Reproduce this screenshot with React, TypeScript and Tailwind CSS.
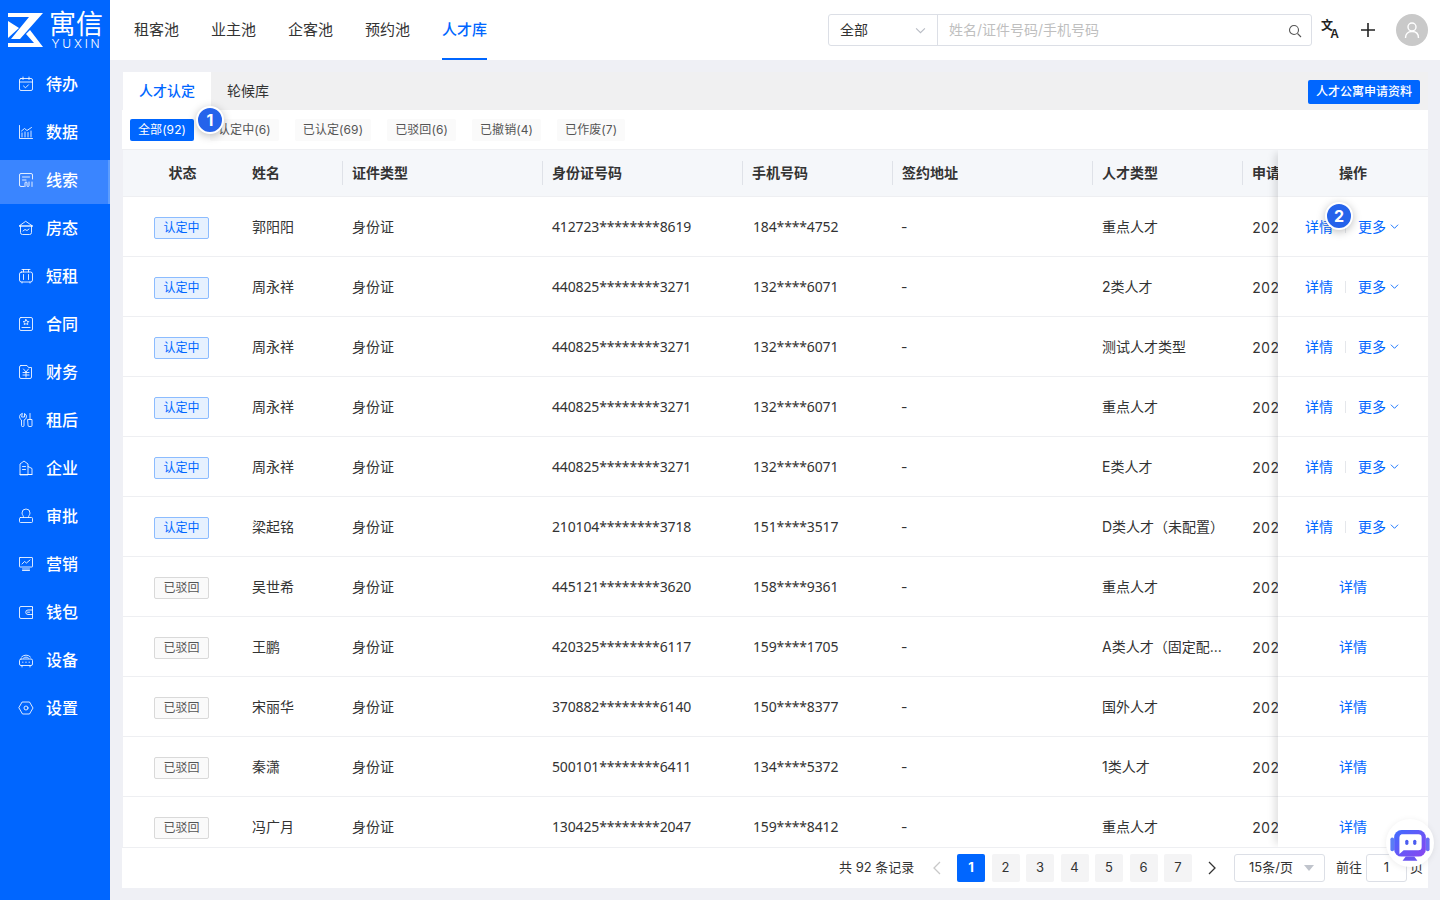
import React from "react";

const S = ({ children }: { children: React.ReactNode }) => (
  <svg width="16" height="16" viewBox="0 0 16 16" fill="none" stroke="#fff" strokeOpacity="0.85" strokeWidth="1" strokeLinecap="round" strokeLinejoin="round" className="shrink-0">
    {children}
  </svg>
);

const icons: Record<string, React.ReactNode> = {
  待办: <S><rect x="1.5" y="2.5" width="13" height="12" rx="1.5" /><path d="M1.5 6h13M5 1v2.5M11 1v2.5M5.5 10l2 1.8 3-3" /></S>,
  数据: <S><path d="M1.5 1.5v13h13" /><path d="M4 13V9M7 13V8M10 13V8.5M13 13V7M3.5 7l3-2.5 2.5 2 4.5-3" /></S>,
  线索: <S><path d="M6 14.5H3a1.5 1.5 0 0 1-1.5-1.5V3A1.5 1.5 0 0 1 3 1.5h10A1.5 1.5 0 0 1 14.500 3v4" /><path d="M4.500 5h7M4.500 8H8M7 14.500V11a1 1 0 0 1 2 0v2.500a1 1 0 0 0 2 0V10M14 10v4.500" /></S>,
  房态: <S><path d="M8 1.500 14.500 6H1.500Z" /><path d="M2.500 6v6.500a2 2 0 0 0 2 2h7a2 2 0 0 0 2-2V6" /><path d="M1.500 6h13M5 11l2-1.500 2 1 2-1.500" /></S>,
  短租: <S><rect x="1.500" y="4" width="13" height="10" rx="2" /><path d="M4 1.500h8M5.500 1.500V4M10.500 1.500V4M5.500 6.500v5M10.500 6.500v5M4 14v1M12 14v1" /></S>,
  合同: <S><rect x="1.500" y="1.500" width="13" height="13" rx="1.500" /><path d="m8 3.500 1 1.800 1.800.3-1.300 1.300.3 1.600L8 7.700l-1.800.8.3-1.600L5.200 5.600 7 5.300ZM4 11.500h8" /></S>,
  财务: <S><path d="M3 1.500h6l1.500 2h3V13a1.500 1.500 0 0 1-1.500 1.500H3A1.500 1.500 0 0 1 1.500 13V3A1.500 1.500 0 0 1 3 1.500Z" /><path d="m5.500 5 2.500 3 2.500-3M5 8.500h6M5 11h6M8 8v5" /></S>,
  租后: <S><path d="M4 1.500A3.500 3.500 0 0 0 3.500 8v5.500a1 1 0 0 0 1 1h.5a1 1 0 0 0 1-1V8A3.500 3.500 0 0 0 6.500 1.500V5H4Z" /><path d="M12 1.500v6M10 7.500h4v6a1 1 0 0 1-1 1h-2a1 1 0 0 1-1-1Z" /></S>,
  企业: <S><path d="M2 14.500V4l4-3 4 3v10.500ZM10 6.500l4 2v6h-4M2 14.500h12" /><path d="M4.500 6.500h3M4.500 9.500h3" /></S>,
  审批: <S><path d="M5.500 9.500c.5-1.500-1.500-2.500-1.500-4.500a4 4 0 0 1 8 0c0 2-2 3-1.500 4.500" /><rect x="1.500" y="9.500" width="13" height="5" rx="1" /></S>,
  营销: <S><rect x="1.500" y="1.500" width="13" height="9.500" rx="0.500" /><path d="m4 8 2.500-2.500 2 1.500 3.500-3M4.500 13h7M4.500 14.500h7" /></S>,
  钱包: <S><path d="M14.500 3.500V2.500H3A1.500 1.500 0 0 0 1.500 4v9A1.500 1.500 0 0 0 3 14.500h11.500v-11Z" /><path d="M14.500 6H10a2 2 0 0 0 0 4.500h4.500M9.500 8.200h2" /></S>,
  设备: <S><rect x="1.500" y="7" width="13" height="6.500" rx="1.500" /><path d="M4 13.500V15M12 13.500V15M4.500 10.200h.5M7.700 10.200h.6M11 10.200h.5M3.500 5A6 6 0 0 1 12.500 5M5.500 6a3.500 3.500 0 0 1 5 0" /></S>,
  设置: <S><path d="M4.500 2h7L15 8l-3.500 6h-7L1 8Z" /><circle cx="8" cy="8" r="2" /></S>,
};

const menu = ["待办", "数据", "线索", "房态", "短租", "合同", "财务", "租后", "企业", "审批", "营销", "钱包", "设备", "设置"];

type Row = { s: 0 | 1; n: string; id: string; p: string; t: string };
const rows: Row[] = [
  { s: 0, n: "郭阳阳", id: "412723********8619", p: "184****4752", t: "重点人才" },
  { s: 0, n: "周永祥", id: "440825********3271", p: "132****6071", t: "2类人才" },
  { s: 0, n: "周永祥", id: "440825********3271", p: "132****6071", t: "测试人才类型" },
  { s: 0, n: "周永祥", id: "440825********3271", p: "132****6071", t: "重点人才" },
  { s: 0, n: "周永祥", id: "440825********3271", p: "132****6071", t: "E类人才" },
  { s: 0, n: "梁起铭", id: "210104********3718", p: "151****3517", t: "D类人才（未配置）" },
  { s: 1, n: "吴世希", id: "445121********3620", p: "158****9361", t: "重点人才" },
  { s: 1, n: "王鹏", id: "420325********6117", p: "159****1705", t: "A类人才（固定配..." },
  { s: 1, n: "宋丽华", id: "370882********6140", p: "150****8377", t: "国外人才" },
  { s: 1, n: "秦潇", id: "500101********6411", p: "134****5372", t: "1类人才" },
  { s: 1, n: "冯广月", id: "130425********2047", p: "159****8412", t: "重点人才" },
];

const Num = ({ n, className }: { n: number; className: string }) => (
  <div className={`absolute z-20 flex h-[28px] w-[28px] items-center justify-center rounded-full border-2 border-white bg-[#2563eb] text-[16px] font-bold text-white shadow-[0_2px_8px_rgba(0,0,0,0.25)] ${className}`}>
    {n}
  </div>
);

const HeadCell = ({ w, label, sep = true, center = false }: { w: string; label: string; sep?: boolean; center?: boolean }) => (
  <div className={`flex h-full shrink-0 items-center ${w} ${center ? "justify-center" : ""}`}>
    {sep && <span className="h-[24px] w-px shrink-0 bg-[#dfe2e8]" />}
    <span className={`pb-[2px] ${center ? "" : sep ? "pl-[9px]" : "pl-[10px]"}`}>{label}</span>
  </div>
);

const Chevron = ({ className = "" }: { className?: string }) => (
  <svg width="10" height="10" viewBox="0 0 10 10" fill="none" stroke="currentColor" strokeWidth="1" className={className}>
    <path d="M1 3l4 4 4-4" />
  </svg>
);

const numFont = "font-['Noto_Sans','Noto_Sans_CJK_SC',sans-serif] tracking-[-0.15px]";

export default function App() {
  return (
    <div className="flex h-[900px] w-[1440px] overflow-hidden bg-[#eff0f5] font-['Inter','Noto_Sans_CJK_SC',sans-serif] text-[14px] text-[#333]">
      <aside className="flex w-[110px] shrink-0 flex-col bg-[#0066ff] text-white">
        <div className="flex h-[60px] items-start pl-[8px] pt-[13px]">
          <svg width="35" height="34" viewBox="0 0 35 34" fill="#fff" className="shrink-0">
            <path d="M0 0H35L12 26H3L21 4H0Z" />
            <path d="M0 8L11 15 0 25Z" />
            <path d="M0 30H26L18 21 22 17 35 34H0Z" />
          </svg>
          <div className="ml-[5px] flex w-[56px] flex-col items-center">
            <span className="h-[24px] whitespace-nowrap text-[27px] leading-[24px] font-normal">寓信</span>
            <span className="mt-[1px] pl-[2px] text-[12px] leading-[11px] tracking-[2.8px] font-light">YUXIN</span>
          </div>
        </div>
        <nav className="flex flex-col">
          {menu.map((m) => (
            <div key={m} className="relative flex h-[48px] items-center gap-[11px] pl-[18px]">
              {m === "线索" && <span className="absolute inset-x-0 top-[4px] bottom-0 border-r-2 border-[#5c9dff] bg-[#3a85ff]" />}
              <span className="relative z-10 flex items-center gap-[12px]">
                {icons[m]}
                <span className="text-[16px] font-medium text-white">{m}</span>
              </span>
            </div>
          ))}
        </nav>
      </aside>

      <div className="flex min-w-0 flex-1 flex-col">
        <header className="flex h-[60px] shrink-0 items-center bg-white pl-[24px] pr-[12px]">
          <nav className="flex h-full gap-[32px] text-[15px]">
            {["租客池", "业主池", "企客池", "预约池", "人才库"].map((t) => (
              <div key={t} className={`flex h-full items-center ${t === "人才库" ? "border-b-2 border-[#0066ff] pt-[2px] font-medium text-[#0066ff]" : ""}`}>{t}</div>
            ))}
          </nav>
          <div className="ml-auto flex h-[32px] w-[484px] items-center rounded-[3px] border border-[#dcdfe6] text-[14px]">
            <div className="flex h-full w-[109px] shrink-0 items-center justify-between border-r border-[#dcdfe6] pl-[11px] pr-[11px]">
              <span className="pb-[2px]">全部</span>
              <Chevron className="h-[11px] w-[11px] text-[#b8bcc4]" />
            </div>
            <span className="flex-1 pb-[2px] pl-[11px] text-[#bfbfbf]">姓名/证件号码/手机号码</span>
            <svg width="14" height="14" viewBox="0 0 14 14" fill="none" stroke="#555" strokeWidth="1.100" className="mr-[9px] mt-[2px]">
              <circle cx="6" cy="6" r="4.500" /><path d="m9.500 9.500 3.500 3.500" />
            </svg>
          </div>
          <div className="relative ml-[9px] h-[18px] w-[18px] shrink-0 font-bold text-[#222]">
            <span className="absolute left-0 top-[-1px] text-[12px] leading-[12px]">文</span>
            <span className="absolute right-0 bottom-[-1px] font-['Liberation_Sans'] text-[12px] leading-[11px]">A</span>
          </div>
          <svg width="14" height="14" viewBox="0 0 14 14" stroke="#222" strokeWidth="1.600" className="ml-[22px] shrink-0"><path d="M7 0v14M0 7h14" /></svg>
          <div className="ml-[21px] flex h-[32px] w-[32px] shrink-0 items-center justify-center rounded-full bg-[#c9c9c9]">
            <svg width="18" height="18" viewBox="0 0 18 18" fill="none" stroke="#fff" strokeWidth="1.400"><circle cx="9" cy="6" r="4" /><path d="M2.500 17c0-4 2.500-6.500 6.500-6.500s6.500 2.500 6.500 6.500" /></svg>
          </div>
        </header>

        <main className="flex min-h-0 flex-1 flex-col pb-[12px] pl-[12px] pr-[12px] pt-[12px]">
          <div className="relative flex min-h-0 flex-1 flex-col">
            <div className="ml-px flex h-[38px] shrink-0 items-center bg-[#f0f0f1] pr-[8px]">
              <div className="flex h-full w-[88px] items-center justify-center bg-white pb-[2px] font-medium text-[#0066ff]">人才认定</div>
              <div className="ml-[16px] pb-[2px]">轮候库</div>
              <button className="ml-auto flex h-[24px] w-[112px] translate-y-[1px] items-center justify-center rounded-[2px] bg-[#0066ff] pb-[1px] text-[12px] font-medium text-white">人才公寓申请资料</button>
            </div>
            <div className="flex h-[40px] shrink-0 items-center gap-[16px] border-b border-[#eeeff2] bg-white pl-[8px] text-[12px] tracking-[0.1px] text-[#555]">
              <span className="flex h-[22px] w-[64px] items-center justify-center rounded-[2px] bg-[#0066ff] text-white">全部(92)</span>
              {["认定中(6)", "已认定(69)", "已驳回(6)", "已撤销(4)", "已作废(7)"].map((c) => (
                <span key={c} className="flex h-[22px] items-center justify-center rounded-[2px] bg-[#fafafa] px-[8px]">{c}</span>
              ))}
            </div>

            <div className="ml-px flex min-h-0 flex-1 overflow-hidden bg-white">
              <div className="min-w-0 flex-1 overflow-hidden">
                <div className="flex h-[47px] border-b border-[#eeeff2] bg-[#f5f7fa] font-bold">
                  <HeadCell w="w-[119px]" label="状态" sep={false} center />
                  <HeadCell w="w-[100px]" label="姓名" sep={false} />
                  <HeadCell w="w-[200px]" label="证件类型" />
                  <HeadCell w="w-[200px]" label="身份证号码" />
                  <HeadCell w="w-[150px]" label="手机号码" />
                  <HeadCell w="w-[200px]" label="签约地址" />
                  <HeadCell w="w-[150px]" label="人才类型" />
                  <HeadCell w="w-[150px]" label="申请时间" />
                </div>
                {rows.map((r, i) => (
                  <div key={i} className="flex h-[60px] items-center border-b border-[#eeeff2]">
                    <div className="flex w-[117px] shrink-0 justify-center pt-[2px]">
                      <span className={`flex h-[22px] w-[55px] items-center justify-center rounded-[2px] border text-[12px] ${r.s === 0 ? "border-[#8cbcff] bg-[#e6f1ff] text-[#0066ff]" : "border-[#d9d9d9] bg-[#fafafa] text-[#555]"}`}>
                        {r.s === 0 ? "认定中" : "已驳回"}
                      </span>
                    </div>
                    <div className="w-[102px] shrink-0 pl-[12px]">{r.n}</div>
                    <div className="w-[200px] shrink-0 pl-[10px]">身份证</div>
                    <div className={`w-[200px] shrink-0 pl-[10px] ${numFont}`}>{r.id}</div>
                    <div className={`w-[150px] shrink-0 pl-[11px] ${numFont}`}>{r.p}</div>
                    <div className="w-[200px] shrink-0 pl-[9px]">-</div>
                    <div className="w-[150px] shrink-0 whitespace-nowrap pl-[10px]">{r.t}</div>
                    <div className="w-[150px] shrink-0 pl-[10px] pt-[1px] tabular-nums">2023-08-01</div>
                  </div>
                ))}
              </div>
              <div className="relative z-10 w-[150px] shrink-0 bg-white shadow-[-6px_0_8px_-3px_rgba(0,0,0,0.13)]">
                <div className="flex h-[47px] items-center justify-center border-b border-[#eeeff2] bg-[#f5f7fa] pb-[2px] font-bold">操作</div>
                {rows.map((r, i) => (
                  <div key={i} className="flex h-[60px] items-center justify-center border-b border-[#eeeff2] text-[#0066ff]">
                    {r.s === 0 ? (
                      <div className="mr-[2px] flex w-[94px] items-center justify-between">
                        <span>详情</span>
                        <span className="h-[12px] w-px bg-[#e5e7eb]" />
                        <span className="flex items-center gap-[4px]">更多<Chevron className="h-[9px] w-[9px]" /></span>
                      </div>
                    ) : (
                      <span>详情</span>
                    )}
                  </div>
                ))}
              </div>
            </div>

            <div className="relative z-10 flex h-[41px] shrink-0 items-center border-t border-[#eeeff2] bg-white pl-[717px] text-[13px]">
              <span className="w-[75px] whitespace-nowrap">共 92 条记录</span>
              <svg width="8" height="14" viewBox="0 0 8 14" fill="none" stroke="#c8c8c8" strokeWidth="1.300" className="ml-[19px]"><path d="M7 1 1 7l6 6" /></svg>
              <div className="ml-[16px] flex gap-[6.500px]">
                {[1, 2, 3, 4, 5, 6, 7].map((n) => (
                  <span key={n} className={`flex h-[28px] w-[28px] items-center justify-center rounded-[2px] ${n === 1 ? "bg-[#0066ff] font-bold text-white" : "bg-[#f4f4f5] text-[#333]"}`}>{n}</span>
                ))}
              </div>
              <svg width="8" height="14" viewBox="0 0 8 14" fill="none" stroke="#333" strokeWidth="1.300" className="ml-[16px]"><path d="m1 1 6 6-6 6" /></svg>
              <div className="ml-[18px] flex h-[28px] w-[91px] items-center justify-between rounded-[3px] border border-[#dcdfe6] pl-[14px] pr-[10px]">
                <span>15条/页</span>
                <span className="h-0 w-0 border-x-[5px] border-t-[6px] border-x-transparent border-t-[#c0c4cc]" />
              </div>
              <span className="ml-[11px] whitespace-nowrap">前往</span>
              <span className="ml-[4px] flex h-[28px] w-[41px] items-center justify-center rounded-[3px] border border-[#dcdfe6]">1</span>
              <span className="ml-[3px]">页</span>
            </div>

            <Num n={1} className="left-[74px] top-[34px]" />
            <Num n={2} className="left-[1203px] top-[130px]" />
            <div className="absolute left-[1264px] top-[747px] z-30 flex h-[48px] w-[48px] items-center justify-center rounded-full bg-white pt-[5px] shadow-[0_1px_6px_rgba(0,0,0,0.08)]">
              <svg width="42" height="36" viewBox="0 0 38 34">
                <defs>
                  <linearGradient id="bot" x1="0" y1="0" x2="1" y2="1">
                    <stop offset="0" stopColor="#3f6cff" />
                    <stop offset="1" stopColor="#8a45f0" />
                  </linearGradient>
                </defs>
                <rect x="0.500" y="9" width="3.500" height="13" rx="1.700" fill="#5a7cf5" />
                <rect x="34" y="9" width="3.500" height="13" rx="1.700" fill="#6a6cf5" />
                <rect x="4" y="2" width="30" height="25" rx="7" fill="url(#bot)" />
                <path d="M11 6h16a3 3 0 0 1 3 3v9a3 3 0 0 1-3 3H13l-4 3.500V9a3 3 0 0 1 2-3Z" fill="#fff" />
                <rect x="14.500" y="11" width="3" height="5" rx="1.500" fill="#4a5cf0" />
                <rect x="22" y="11" width="3" height="5" rx="1.500" fill="#4a5cf0" />
                <path d="M15 27h8l3 4H12Z" fill="#6a55f0" />
              </svg>
            </div>
          </div>
        </main>
      </div>
    </div>
  );
}
